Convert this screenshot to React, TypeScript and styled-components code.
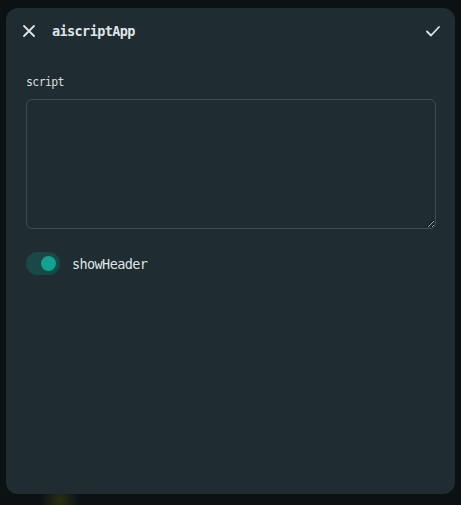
import React from "react";
import styled, { createGlobalStyle } from "styled-components";

const Global = createGlobalStyle`
  html, body { margin: 0; padding: 0; background: #0c1214; }
  body { font-family: "DejaVu Sans Mono", "Liberation Mono", monospace; }
  * { box-sizing: border-box; }
`;

const Backdrop = styled.div`
  width: 461px;
  height: 505px;
  padding: 8px 6px 11px 6px;
  background: radial-gradient(circle at 60px 500px, #2a2f14 0, transparent 20px), #0c1214;
  display: flex;
`;

const Modal = styled.div`
  flex: 1;
  background: #1f2c31;
  border-radius: 12px;
  display: flex;
  flex-direction: column;
  overflow: hidden;
`;

const Header = styled.div`
  height: 45px;
  display: flex;
  align-items: center;
  padding: 0 7px 0 8px;
`;

const IconButton = styled.button`
  width: 30px;
  height: 30px;
  display: flex;
  align-items: center;
  justify-content: center;
  background: none;
  border: none;
  padding: 0;
  color: #dfe4e5;
  cursor: pointer;
`;

const Title = styled.div`
  flex: 1;
  margin-left: 8px;
  font-size: 13.5px;
  letter-spacing: -0.6px;
  font-weight: bold;
  color: #dfe4e5;
`;

const Body = styled.div`
  padding: 22px 19px 0 20px;
  display: flex;
  flex-direction: column;
`;

const Label = styled.div`
  font-size: 11.5px;
  letter-spacing: -0.6px;
  color: #d8dddf;
  margin-bottom: 10px;
  line-height: 14px;
`;

const TextArea = styled.textarea`
  width: 410px;
  height: 130px;
  background: transparent;
  border: 1px solid #3e4d52;
  border-radius: 6px;
  color: #dfe4e5;
  font-family: inherit;
  padding: 8px;
  outline: none;
`;

const ToggleRow = styled.label`
  display: flex;
  align-items: center;
  gap: 12px;
  margin-top: 23px;
`;

const Track = styled.span<{ $on: boolean }>`
  width: 34px;
  height: 23px;
  border-radius: 12px;
  background: ${(p) => (p.$on ? "#1a4846" : "#34454b")};
  display: flex;
  align-items: center;
  justify-content: ${(p) => (p.$on ? "flex-end" : "flex-start")};
  padding: 0 4px;
`;

const Knob = styled.span`
  width: 15px;
  height: 15px;
  border-radius: 50%;
  background: #0fa390;
`;

const ToggleLabel = styled.span`
  font-size: 13.5px;
  letter-spacing: -0.6px;
  color: #dfe4e5;
`;

export default function App() {
  return (
    <>
      <Global />
      <Backdrop>
        <Modal>
          <Header>
            <IconButton aria-label="close">
              <svg width="16" height="16" viewBox="0 0 16 16" fill="none" stroke="currentColor" strokeWidth="1.8" strokeLinecap="round">
                <path d="M3 3l10 10M13 3L3 13" />
              </svg>
            </IconButton>
            <Title>aiscriptApp</Title>
            <IconButton aria-label="ok">
              <svg width="18" height="18" viewBox="0 0 18 18" fill="none" stroke="currentColor" strokeWidth="1.8" strokeLinecap="round" strokeLinejoin="round">
                <path d="M3 9.5l4 4L15 5" />
              </svg>
            </IconButton>
          </Header>
          <Body>
            <Label>script</Label>
            <TextArea />
            <ToggleRow>
              <Track $on={true}>
                <Knob />
              </Track>
              <ToggleLabel>showHeader</ToggleLabel>
            </ToggleRow>
          </Body>
        </Modal>
      </Backdrop>
    </>
  );
}
